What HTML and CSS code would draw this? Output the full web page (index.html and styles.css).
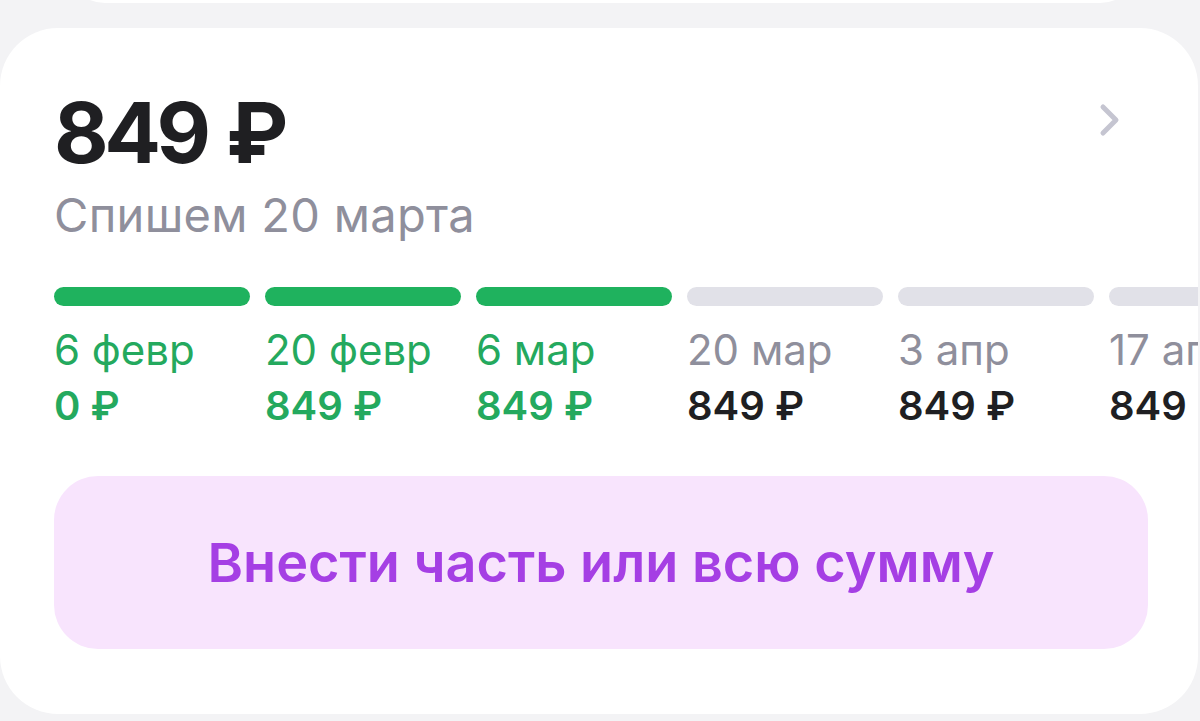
FILE: index.html
```html
<!DOCTYPE html>
<html lang="ru">
<head>
<meta charset="utf-8">
<link rel="stylesheet" href="styles.css">
</head>
<body>
<div class="prev-card"></div>
<section class="card">
  <div class="head">
    <div class="head-text">
      <div class="amount">849 ₽</div>
      <div class="subtitle">Спишем 20 марта</div>
    </div>
    <svg class="chevron" width="24" height="34" viewBox="0 0 24 34"><path d="M5 4 L18 17 L5 30" fill="none" stroke="#c5c5d1" stroke-width="5" stroke-linecap="round" stroke-linejoin="round"/></svg>
  </div>
  <div class="timeline">
    <div class="step paid"><div class="bar"></div><div class="date">6 февр</div><div class="sum">0 ₽</div></div>
    <div class="step paid"><div class="bar"></div><div class="date">20 февр</div><div class="sum">849 ₽</div></div>
    <div class="step paid"><div class="bar"></div><div class="date">6 мар</div><div class="sum">849 ₽</div></div>
    <div class="step"><div class="bar"></div><div class="date">20 мар</div><div class="sum">849 ₽</div></div>
    <div class="step"><div class="bar"></div><div class="date">3 апр</div><div class="sum">849 ₽</div></div>
    <div class="step"><div class="bar"></div><div class="date">17 апр</div><div class="sum">849 ₽</div></div>
  </div>
  <button class="pay-btn">Внести часть или всю сумму</button>
</section>
</body>
</html>
```
FILE: styles.css
```css
html, body {
  margin: 0;
  padding: 0;
}
body {
  background: #f3f3f5;
  width: 1200px;
  height: 721px;
  overflow: hidden;
  font-family: Inter, "Noto Sans", sans-serif;
}
.prev-card {
  margin: -60px 60px 0 65px;
  height: 63px;
  background: #fff;
  border-radius: 0 0 40px 40px;
}
.card {
  margin: 25px 2px 0 0;
  height: 686px;
  background: #fff;
  border-radius: 58px;
  overflow: hidden;
  padding: 0 0 0 54px;
  box-sizing: border-box;
}
.head {
  display: flex;
  justify-content: space-between;
  align-items: flex-start;
  padding: 53px 76px 0 0;
}
.amount {
  font-size: 84px;
  font-weight: 700;
  color: #1f1f22;
  line-height: 104px;
  letter-spacing: -4.5px;
  word-spacing: 4px;
}
.subtitle {
  margin-top: 2px;
  font-size: 47px;
  color: #8f8f9c;
  line-height: 56px;
  letter-spacing: 0.3px;
}
.chevron {
  margin-top: 22px;
}
.timeline {
  display: flex;
  gap: 15px;
  margin-top: 44px;
}
.step {
  flex: 0 0 196px;
}
.bar {
  height: 19px;
  border-radius: 10px;
  background: #e1e1e8;
}
.paid .bar {
  background: #1fb25e;
}
.date {
  margin-top: 19px;
  font-size: 42px;
  line-height: 50px;
  color: #8f8f9c;
  white-space: nowrap;
}
.sum {
  margin-top: 6px;
  font-size: 40px;
  font-weight: 600;
  line-height: 50px;
  color: #1f1f22;
  white-space: nowrap;
}
.paid .date, .paid .sum {
  color: #24a95e;
}
.pay-btn {
  display: block;
  margin-top: 45px;
  width: 1094px;
  height: 173px;
  border: none;
  border-radius: 44px;
  background: #f8e4fd;
  color: #a53fe4;
  font-family: Inter, "Noto Sans", sans-serif;
  font-size: 54px;
  font-weight: 600;
}
```
